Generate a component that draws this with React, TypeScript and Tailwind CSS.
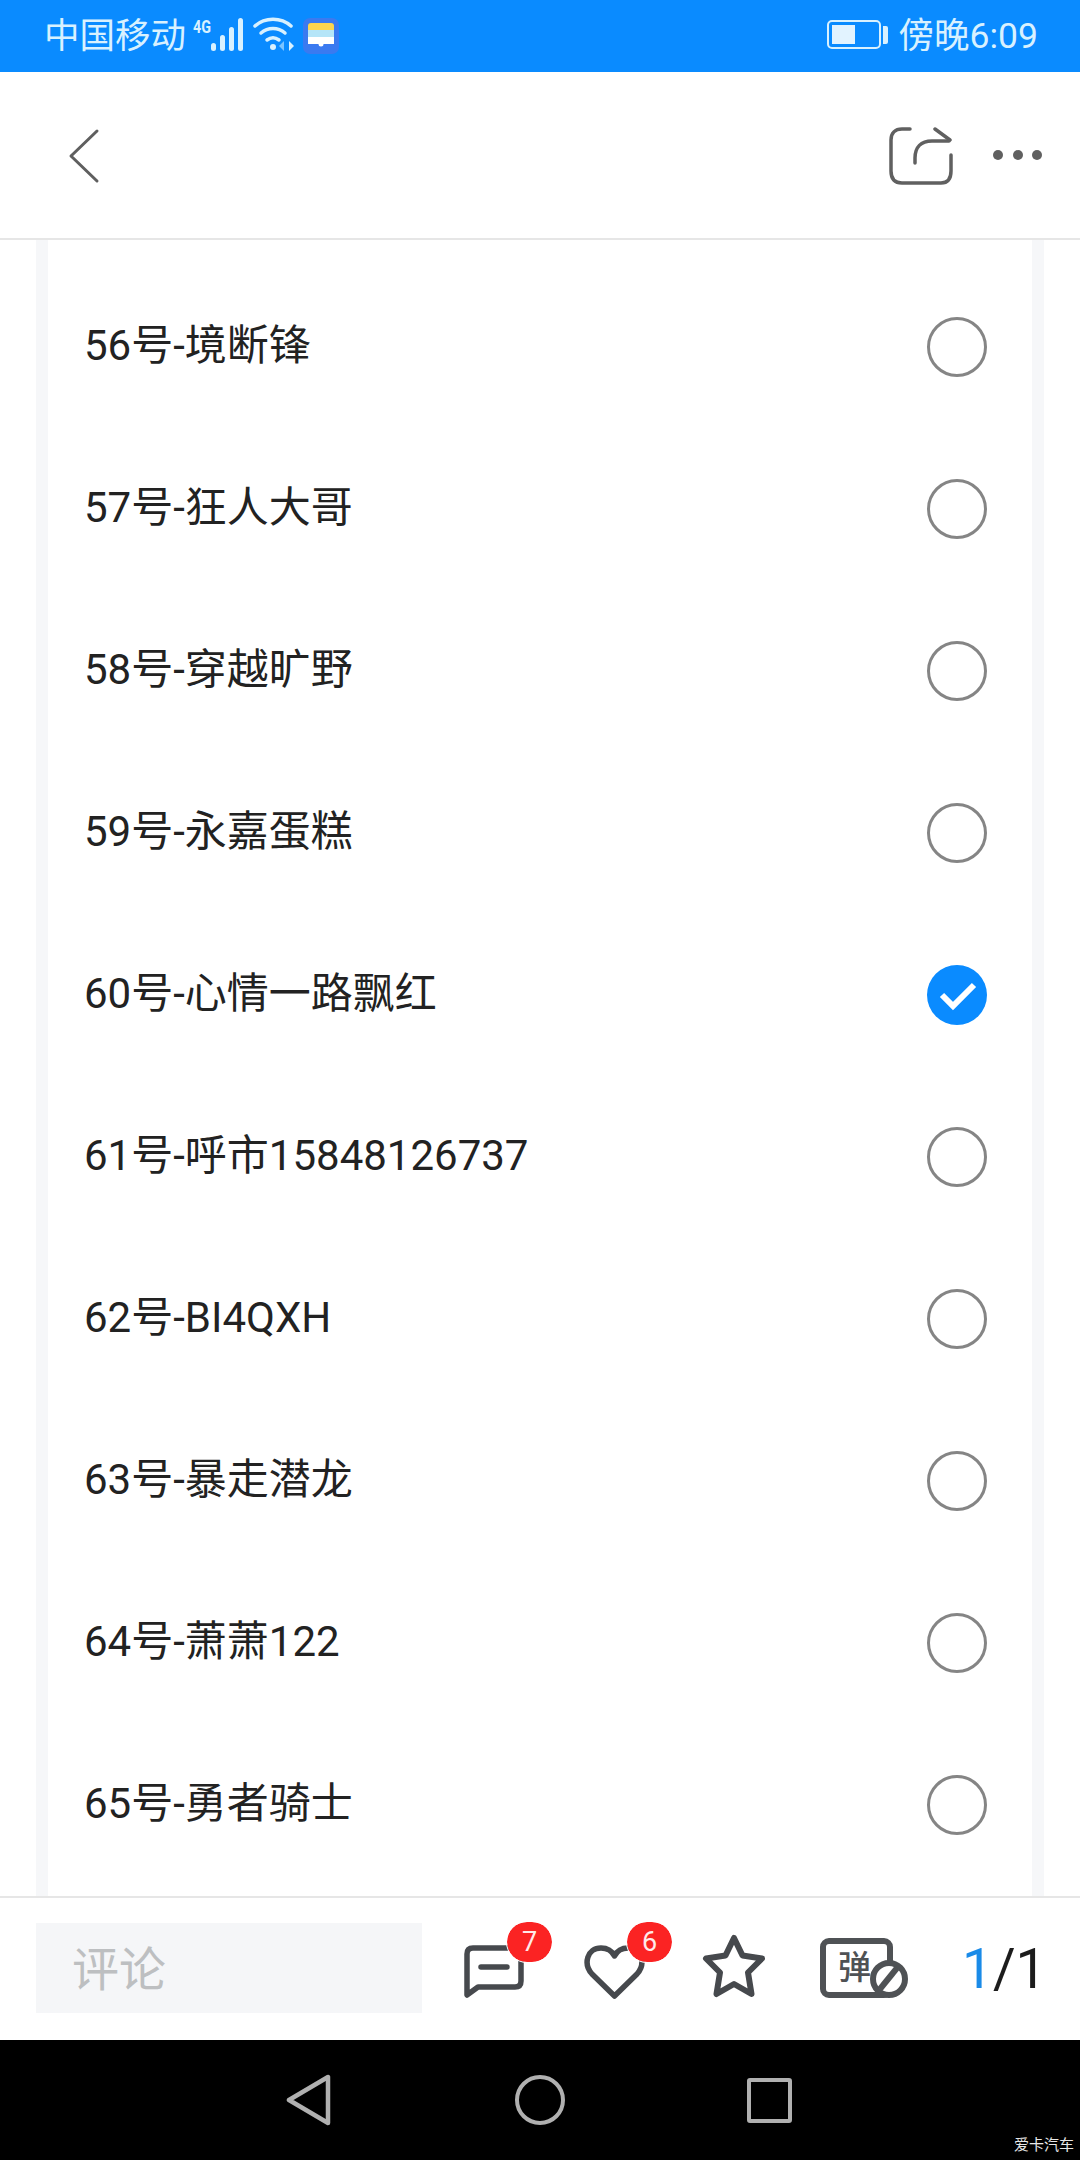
const cjk = "font-['Roboto','Noto_Sans_CJK_SC',sans-serif]";

const ENTRIES = [
  { id: 56, label: "56号-境断锋" },
  { id: 57, label: "57号-狂人大哥" },
  { id: 58, label: "58号-穿越旷野" },
  { id: 59, label: "59号-永嘉蛋糕" },
  { id: 60, label: "60号-心情一路飘红", checked: true },
  { id: 61, label: "61号-呼市15848126737" },
  { id: 62, label: "62号-BI4QXH" },
  { id: 63, label: "63号-暴走潜龙" },
  { id: 64, label: "64号-萧萧122" },
  { id: 65, label: "65号-勇者骑士" },
];

const StatusBar = () => (
  <div className="h-[72px] bg-[#0a8bff] flex items-center pl-[44px] pr-[42px] text-[#d8f1ff]">
    <span className="text-[35.5px] leading-[72px]">中国移动</span>

    {/* 4g + signal */}
    <svg className="ml-[7px] mb-[5px] overflow-visible" width="54" height="36" viewBox="0 0 54 36" fill="#d8f1ff">
      <text x="0" y="17" fontSize="18" fontWeight="700" fontFamily="Roboto, sans-serif" textLength="18" lengthAdjust="spacingAndGlyphs">4G</text>
      <rect x="18" y="27" width="5" height="8" rx="2.5" />
      <rect x="27" y="19" width="5" height="16" rx="2.5" />
      <rect x="36" y="11" width="5" height="24" rx="2.5" />
      <rect x="45" y="2" width="5" height="33" rx="2.5" />
    </svg>

    {/* wifi */}
    <svg className="ml-[6px] mb-[5px]" width="42" height="34" viewBox="0 0 42 34" fill="none" stroke="#d8f1ff" strokeWidth="3.5" strokeLinecap="round">
      <path d="M2 9 C12 0 28 0 38 9" />
      <path d="M8 16 C15 10 25 10 32 16" />
      <path d="M14 23 C18 20 22 20 26 23" />
      <circle cx="20" cy="30" r="3" fill="#d8f1ff" stroke="none" />
      <path d="M36 24 L41 29 L36 34 Z" fill="#d8f1ff" stroke="none" />
      <path d="M31 24 L26 29 L31 34 Z" fill="#7cc4ff" stroke="none" />
    </svg>

    {/* wallet notification */}
    <svg className="ml-[8px] mb-[1px]" width="36" height="36" viewBox="0 0 36 36">
      <rect width="36" height="36" rx="7" fill="#3a7af0" />
      <path d="M5 8 a3 3 0 0 1 3-3 h20 a3 3 0 0 1 3 3 v6 H5 Z" fill="#fdd54f" />
      <rect x="5" y="12" width="26" height="7" fill="#b5e5f8" />
      <rect x="5" y="19" width="26" height="7" fill="#ffffff" />
      <circle cx="18" cy="26" r="2.5" fill="#ffffff" />
    </svg>

    <div className="flex-1" />

    {/* battery */}
    <div className="flex items-center mb-[1px]">
      <div className="w-[54px] h-[29px] border-2 border-[#d8f1ff] rounded-[5px] p-[3px] mt-[-2px]">
        <div className="w-[23px] h-full bg-[#e2f3ff]" />
      </div>
      <div className="w-[5px] h-[18px] bg-[#d8f1ff] rounded-r-[2px] ml-[2px] mt-[-2px]" />
    </div>

    <span className="ml-[11px] text-[35.5px] leading-[72px]">傍晚6:09</span>
  </div>
);

const NavBar = () => (
  <div className="h-[168px] bg-white border-b-2 border-[#e6e6e6] flex items-center shrink-0">
    <svg className="ml-[68px] mt-[1px]" width="32" height="56" viewBox="0 0 32 56" fill="none" stroke="#5f5f5f" strokeWidth="3" strokeLinecap="round" strokeLinejoin="round">
      <path d="M29 3 L3 28 L29 53" />
    </svg>
    <div className="flex-1" />
    <svg className="mt-[2px]" width="64" height="58" viewBox="0 0 64 58" fill="none" stroke="#606060" strokeWidth="3.5" strokeLinecap="round" strokeLinejoin="round">
      <path d="M21 2 H13 C6 2 2 6 2 13 V44 C2 52 6 56 13 56 H52 C59 56 62 52 62 44 V28" />
      <path d="M26 36 V31 C26 20 32 14 43 14 H60" />
      <path d="M46 2 L61 13" />
    </svg>
    <div className="ml-[40px] mr-[38px] flex gap-[9.5px]">
      <div className="w-[10px] h-[10px] rounded-full bg-[#606060]" />
      <div className="w-[10px] h-[10px] rounded-full bg-[#606060]" />
      <div className="w-[10px] h-[10px] rounded-full bg-[#606060]" />
    </div>
  </div>
);

const Radio = ({ checked }: { checked?: boolean }) => {
  if (checked) {
    return (
      <svg width="60" height="60" viewBox="0 0 60 60">
        <circle cx="30" cy="30" r="30" fill="#0a8bff" />
        <path d="M15 30 L26 41 L47 20" fill="none" stroke="#fff" strokeWidth="6" />
      </svg>
    );
  }
  return <div className="w-[60px] h-[60px] rounded-full border-[3px] border-[#858585]" />;
};

const Badge = ({ value, className }: { value: number; className: string }) => (
  <div className={`absolute top-[-23px] w-[45px] h-[40px] rounded-full bg-[#fb2323] text-[#ffe9e9] text-[27px] leading-[40px] text-center outline outline-1 outline-white ${className}`}>
    {value}
  </div>
);

const BottomBar = () => (
  <div className="h-[144px] bg-white border-t-2 border-[#e6e6e6] flex items-center shrink-0">
    <div className="ml-[36px] w-[386px] h-[90px] mt-[-2px] bg-[#f5f6f8] flex items-center pl-[36px] text-[#bdbfc1] text-[47px]">
      <span className="mt-[4px]">评论</span>
    </div>

    {/* comments */}
    <div className="relative ml-[42px] mt-[5px]">
      <svg className="block" width="60" height="54" viewBox="0 0 60 54" fill="none" stroke="#46494d" strokeWidth="5.5" strokeLinejoin="round" strokeLinecap="round">
        <path d="M3 50 V9 C3 5 5 3 9 3 H51 C55 3 57 5 57 9 V36 C57 40 55 42 51 42 H14 Z" />
        <path d="M17 22 H43" />
      </svg>
      <Badge value={7} className="left-[43px]" />
    </div>

    {/* likes */}
    <div className="relative ml-[60px] mt-[6px]">
      <svg className="block" width="61" height="55" viewBox="0 0 61 55" fill="none" stroke="#46494d" strokeWidth="5.5" strokeLinejoin="round">
        <path d="M30.5 51 L8 29 C-1 19 3 3 17 3 C23 3 28 6 30.5 11 C33 6 38 3 44 3 C58 3 62 19 53 29 Z" />
      </svg>
      <Badge value={6} className="left-[43px] top-[-23px]" />
    </div>

    {/* star */}
    <svg className="ml-[57px] mb-[7px]" width="64" height="64" viewBox="0 0 64 64" fill="none" stroke="#46494d" strokeWidth="6" strokeLinejoin="round">
      <path d="M32 4 L40.5 21.5 L60 24.5 L46 38.5 L49.5 60 L32 50 L14.5 60 L18 38.5 L4 24.5 L23.5 21.5 Z" />
    </svg>

    {/* danmaku toggle */}
    <div className="relative ml-[54px] w-[88px] h-[60px] mt-[-2px] shrink-0">
      <div className="w-[73px] h-[60px] border-[6px] border-[#4f5255] rounded-[9px] text-[#4f5255] text-[33px] font-medium leading-[48px] pl-[12px]">
        弹
      </div>
      <svg className="absolute right-0 bottom-0" width="38" height="38" viewBox="0 0 38 38" fill="#fff" stroke="#4f5255" strokeWidth="6">
        <circle cx="19" cy="19" r="16" />
        <path d="M10 29 L27 8" strokeWidth="6" />
      </svg>
    </div>

    <div className="ml-[54px] text-[55px] leading-none text-[#1c1c1c] whitespace-nowrap">
      <span className="text-[#1a8be8]">1</span>/1
    </div>
  </div>
);

const SystemNav = () => (
  <div className="relative h-[120px] bg-black flex items-center shrink-0">
    <svg className="ml-[286px]" width="46" height="54" viewBox="0 0 46 54" fill="none" stroke="#b0b0b0" strokeWidth="4.5" strokeLinejoin="round">
      <path d="M42 4 V50 L3 27 Z" />
    </svg>
    <div className="ml-[183px] w-[50px] h-[50px] rounded-full border-[4px] border-[#b0b0b0]" />
    <div className="ml-[182px] w-[45px] h-[45px] rounded-[3px] border-[4px] border-[#b0b0b0]" />
    <span className="absolute right-[6px] bottom-[5px] text-[15px] leading-[20px] text-[#e8e8e8]">爱卡汽车</span>
  </div>
);

const App = () => {
  return (
    <div className={`w-[1080px] h-[2160px] flex flex-col overflow-hidden bg-white ${cjk}`}>
      <StatusBar />
      <NavBar />

      {/* vote list */}
      <div className="flex-1 min-h-0 overflow-hidden bg-white px-[36px]">
        <div className="h-full overflow-hidden border-x-[12px] border-[#f6f7f9] pt-[26px]">
          {ENTRIES.map((entry) => (
            <div key={entry.id} className="h-[162px] flex items-center justify-between pl-[36px] pr-[45px]">
              <p className="text-[42px] text-[#222222] mb-[4px]">{entry.label}</p>
              <Radio checked={entry.checked} />
            </div>
          ))}
        </div>
      </div>

      <BottomBar />
      <SystemNav />
    </div>
  );
};

export default App;
